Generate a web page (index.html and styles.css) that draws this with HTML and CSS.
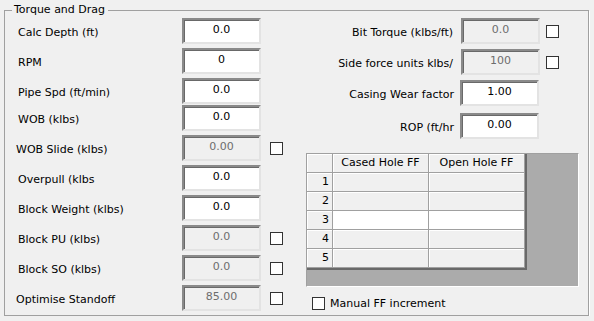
FILE: index.html
```html
<!DOCTYPE html>
<html lang="en">
<head>
    <meta charset="UTF-8">
    <title>Torque and Drag</title>
    <link rel="stylesheet" href="styles.css">
</head>
<body>
    <fieldset class="group">
        <legend>Torque and Drag</legend>
        <div class="cols">
            <div class="col-left">
                <div class="row"><span class="lbl">Calc Depth (ft)</span><span class="box">0.0</span></div>
                <div class="row"><span class="lbl">RPM</span><span class="box">0</span></div>
                <div class="row"><span class="lbl">Pipe Spd (ft/min)</span><span class="box">0.0</span></div>
                <div class="row tight"><span class="lbl">WOB (klbs)</span><span class="box">0.0</span></div>
                <div class="row"><span class="lbl shift">WOB Slide (klbs)</span><span class="box off">0.00</span><span class="chk"></span></div>
                <div class="row"><span class="lbl">Overpull (klbs</span><span class="box">0.0</span></div>
                <div class="row"><span class="lbl">Block Weight (klbs)</span><span class="box">0.0</span></div>
                <div class="row"><span class="lbl">Block PU (klbs)</span><span class="box off">0.0</span><span class="chk"></span></div>
                <div class="row"><span class="lbl">Block SO (klbs)</span><span class="box off">0.0</span><span class="chk"></span></div>
                <div class="row"><span class="lbl shift">Optimise Standoff</span><span class="box off">85.00</span><span class="chk"></span></div>
            </div>
            <div class="col-right">
                <div class="rrow"><span class="rlbl">Bit Torque (klbs/ft)</span><span class="box off">0.0</span><span class="chk"></span></div>
                <div class="rrow"><span class="rlbl">Side force units klbs/</span><span class="box off">100</span><span class="chk"></span></div>
                <div class="rrow nochk"><span class="rlbl">Casing Wear factor</span><span class="box">1.00</span></div>
                <div class="rrow nochk low"><span class="rlbl">ROP (ft/hr</span><span class="box">0.00</span></div>

                <div class="grid">
                    <table>
                        <tr><th class="rh"></th><th>Cased Hole FF</th><th>Open Hole FF</th></tr>
                        <tr><td class="rh">1</td><td></td><td></td></tr>
                        <tr><td class="rh">2</td><td></td><td></td></tr>
                        <tr class="sel"><td class="rh">3</td><td></td><td></td></tr>
                        <tr><td class="rh">4</td><td></td><td></td></tr>
                        <tr><td class="rh">5</td><td></td><td></td></tr>
                    </table>
                </div>

                <div class="opt"><span class="chk"></span>Manual FF increment</div>
            </div>
        </div>
    </fieldset>
</body>
</html>
```

FILE: styles.css
```css
body {
    margin: 0;
    background: #f0f0f0;
    font-family: "DejaVu Sans", Verdana, sans-serif;
    font-size: 11px;
    color: #000;
}
.group {
    margin: 3px 5px 0 4px;
    padding: 0;
    width: 583px;
    height: 311px;
    box-sizing: content-box;
    border: 1px solid #a0a0a0;
    box-shadow: 1px 1px 0 #fff;
}
.group legend {
    margin-left: 7px;
    padding: 0 3px 0 2px;
    line-height: 14px;
}
.cols {
    display: flex;
    padding-top: 1px;
}
.col-left {
    width: 282px;
    padding-left: 13px;
    display: flex;
    flex-direction: column;
    gap: 4px;
}
.row {
    display: flex;
    align-items: center;
    height: 26px;
}
.row.tight {
    margin-top: -3px;
}
.lbl {
    width: 164px;
    padding-top: 2px;
}
.lbl.shift {
    margin-left: -2px;
    width: 166px;
}
.box {
    box-sizing: border-box;
    width: 79px;
    height: 26px;
    padding-top: 3px;
    text-align: center;
    background: #fff;
    border-top: 2px solid #8a8a8a;
    border-left: 2px solid #8a8a8a;
    border-right: 2px solid #e3e3e3;
    border-bottom: 2px solid #e3e3e3;
    box-shadow: inset 1px 1px 0 #696969;
}
.box.off {
    background: #f0f0f0;
    color: #6d6d6d;
}
.chk {
    display: inline-block;
    box-sizing: border-box;
    width: 13px;
    height: 13px;
    margin-left: 9px;
    background: #fff;
    border: 1px solid #333;
}
.col-right {
    width: 273px;
    margin-left: 6px;
    display: flex;
    flex-direction: column;
}
.rrow {
    display: flex;
    align-items: center;
    height: 26px;
    margin-bottom: 5px;
    padding-right: 20px;
}
.rlbl {
    flex: 1;
    text-align: right;
    padding-right: 8px;
    padding-top: 2px;
}
.rrow .chk {
    margin-left: 6px;
}
.rrow.nochk {
    padding-right: 40px;
}
.rrow.nochk .rlbl {
    padding-right: 6px;
}
.rrow.low {
    margin-top: 2px;
}
.grid {
    box-sizing: border-box;
    width: 273px;
    height: 134px;
    margin-top: 9px;
    background: #ababab;
    border-top: 1px solid #a0a0a0;
    border-left: 1px solid #a0a0a0;
    border-right: 1px solid #fff;
    border-bottom: 1px solid #fff;
}
.grid table {
    border-collapse: separate;
    border-spacing: 0;
    border-right: 2px solid #696969;
    border-bottom: 2px solid #696969;
    background: #f0f0f0;
}
.grid th, .grid td {
    box-sizing: border-box;
    height: 19px;
    width: 96px;
    padding: 0 0 1px;
    font-weight: normal;
    text-align: center;
    border-right: 1px solid #a0a0a0;
    border-bottom: 1px solid #a0a0a0;
    box-shadow: inset 1px 1px 0 #fff;
}
.grid .rh {
    width: 26px;
    text-align: right;
    padding-right: 3px;
}
.grid tr.sel td {
    background: #fff;
}
.grid tr.sel td.rh {
    background: #f0f0f0;
}
.opt {
    display: flex;
    align-items: center;
    margin-top: 10px;
    margin-left: 6px;
}
.opt .chk {
    margin-left: 0;
    margin-right: 5px;
}
```
